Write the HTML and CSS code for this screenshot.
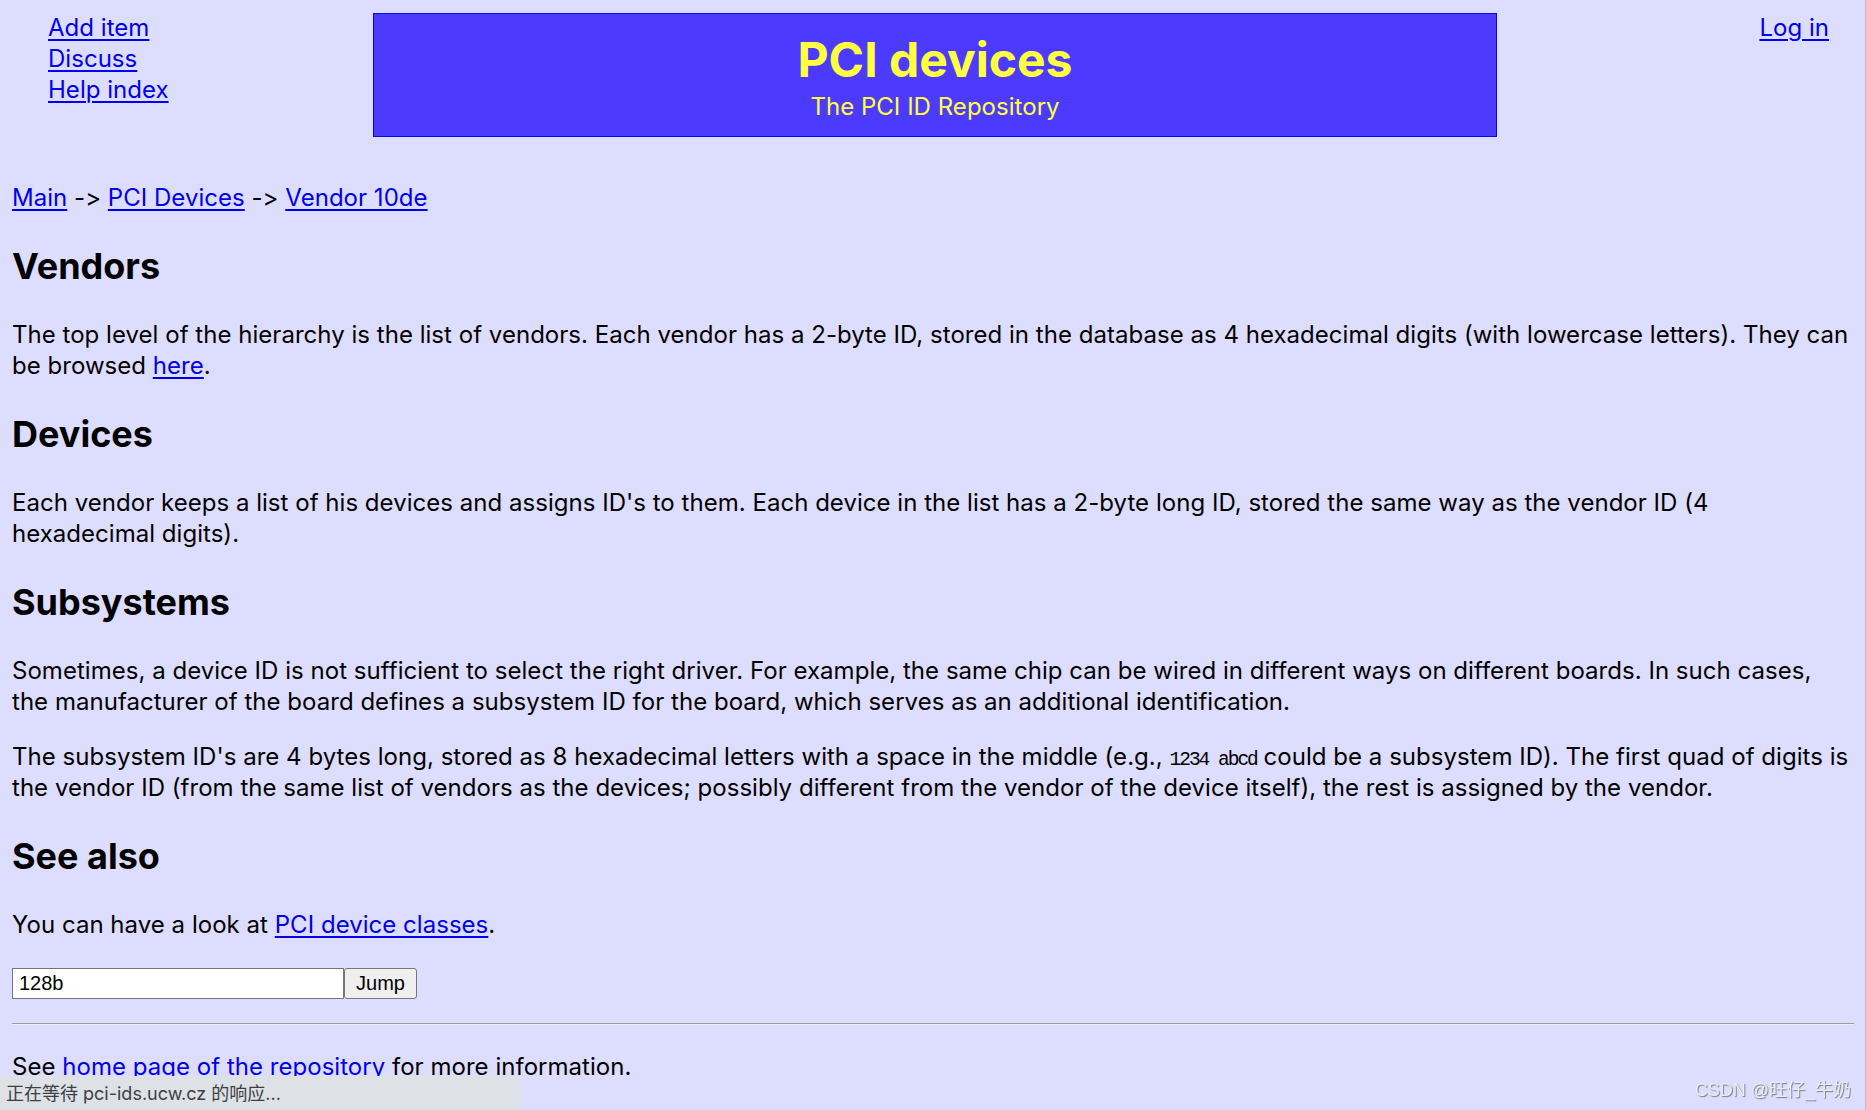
FILE: index.html
```html
<!DOCTYPE html>
<html lang="en">
<head>
<meta charset="utf-8">
<title>PCI devices</title>
<link rel="stylesheet" href="styles.css">
</head>
<body>
<header class="top">
  <nav class="nav">
    <ul>
      <li><a href="#">Add item</a></li>
      <li><a href="#">Discuss</a></li>
      <li><a href="#">Help index</a></li>
    </ul>
  </nav>
  <div class="banner">
    <h1>PCI devices</h1>
    <p class="sub">The PCI ID Repository</p>
  </div>
  <div class="login"><a href="#">Log in</a></div>
</header>

<main>
  <p class="crumbs"><a href="#">Main</a> -&gt; <a href="#">PCI Devices</a> -&gt; <a href="#">Vendor 10de</a></p>

  <h2>Vendors</h2>
  <p>The top level of the hierarchy is the list of vendors. Each vendor has a 2-byte ID, stored in the database as 4 hexadecimal digits (with lowercase letters). They can be browsed <a href="#">here</a>.</p>

  <h2>Devices</h2>
  <p>Each vendor keeps a list of his devices and assigns ID's to them. Each device in the list has a 2-byte long ID, stored the same way as the vendor ID (4 hexadecimal digits).</p>

  <h2>Subsystems</h2>
  <p>Sometimes, a device ID is not sufficient to select the right driver. For example, the same chip can be wired in different ways on different boards. In such cases, the manufacturer of the board defines a subsystem ID for the board, which serves as an additional identification.</p>
  <p>The subsystem ID's are 4 bytes long, stored as 8 hexadecimal letters with a space in the middle (e.g., <code>1234 abcd</code> could be a subsystem ID). The first quad of digits is the vendor ID (from the same list of vendors as the devices; possibly different from the vendor of the device itself), the rest is assigned by the vendor.</p>

  <h2>See also</h2>
  <p>You can have a look at <a href="#">PCI device classes</a>.</p>

  <form class="jump">
    <input class="jump-input" type="text" value="128b">
    <button class="jump-btn" type="button">Jump</button>
  </form>
</main>

<hr class="rule">
<p class="foot">See <a class="plain" href="#">home page of the repository</a> for more information.</p>

<div class="status">正在等待 pci-ids.ucw.cz 的响应...</div>
<div class="watermark">CSDN @旺仔_牛奶</div>
<div class="edge"></div>
</body>
</html>
```
FILE: styles.css
```css
html {
  overflow: hidden;
}
body {
  margin: 12px;
  background: #ddf;
  color: #000;
  font-family: Inter, "Noto Sans", "Noto Sans CJK SC", sans-serif;
  font-size: 24px;
  line-height: 31px;
  letter-spacing: 0.03px;
}
a {
  color: #0000ee;
  text-decoration: underline;
  text-underline-offset: 3px;
  text-decoration-thickness: 2px;
}
p {
  margin: 24px 0;
}

/* header */
.top {
  display: grid;
  grid-template-columns: 361px 1124px 1fr;
  align-items: start;
}
.nav ul {
  list-style: none;
  margin: 0;
  padding: 0 0 0 36px;
}
.nav li {
  line-height: 31px;
}
.banner {
  margin-top: 1px;
  height: 124px;
  box-sizing: border-box;
  background: #4c3bff;
  border: 1px solid #0000ff;
  color: #ffff40;
  text-align: center;
  padding-top: 22px;
}
.banner h1 {
  margin: 0 0 7px;
  font-size: 48px;
  line-height: 48px;
  font-weight: bold;
  letter-spacing: 0;
}
.banner .sub {
  margin: 0;
  font-size: 24px;
  line-height: 31px;
}
.login {
  text-align: right;
  padding-right: 25px;
}

/* content */
.crumbs {
  margin: 45px 0 24px;
}
h2 {
  font-size: 36px;
  line-height: 47px;
  font-weight: bold;
  margin: 30px 0 29px;
  letter-spacing: 0;
}
code {
  font-family: "Liberation Mono", monospace;
  font-size: 19.5px;
  line-height: 1;
  letter-spacing: -2px;
}

.jump {
  display: flex;
  margin: 28px 0 0;
}
.jump-input {
  box-sizing: border-box;
  width: 332px;
  height: 31px;
  margin: 0;
  padding: 0 6px;
  border: 1px solid #767676;
  background: #fff;
  font-family: "Liberation Sans", Arial, sans-serif;
  font-size: 20px;
  color: #000;
}
.jump-btn {
  box-sizing: border-box;
  width: 73px;
  height: 31px;
  margin: 0;
  padding: 0;
  border: 1px solid #767676;
  border-radius: 3px;
  background: #efefef;
  font-family: "Liberation Sans", Arial, sans-serif;
  font-size: 20px;
  color: #000;
}

.rule {
  margin: 24px 0 12px;
  height: 0;
  border: 0;
  border-top: 1px solid #9a9a9a;
  border-bottom: 1px solid #eeeef8;
}
.foot {
  margin: 26px 0 24px;
}
.plain {
  text-decoration: none;
}

/* browser overlays */
.status {
  position: fixed;
  left: 0;
  bottom: 0;
  width: 520px;
  height: 34px;
  box-sizing: border-box;
  padding: 2px 0 0 6px;
  background: #dee1e6;
  border-top-right-radius: 5px;
  color: #3c4043;
  font-family: Inter, "Noto Sans CJK SC", sans-serif;
  font-size: 18px;
  line-height: 32px;
  letter-spacing: 0;
  white-space: nowrap;
}
.watermark {
  position: fixed;
  right: 15px;
  bottom: 9px;
  font-family: "Liberation Sans", "Noto Sans CJK SC", sans-serif;
  font-size: 18px;
  line-height: 22px;
  letter-spacing: 0;
  color: #ececf4;
  text-shadow: 1px 1px 1px #7a7a80;
}
.edge {
  position: fixed;
  top: 0;
  right: 0;
  width: 1px;
  height: 100%;
  background: #bdbdc4;
}
```
